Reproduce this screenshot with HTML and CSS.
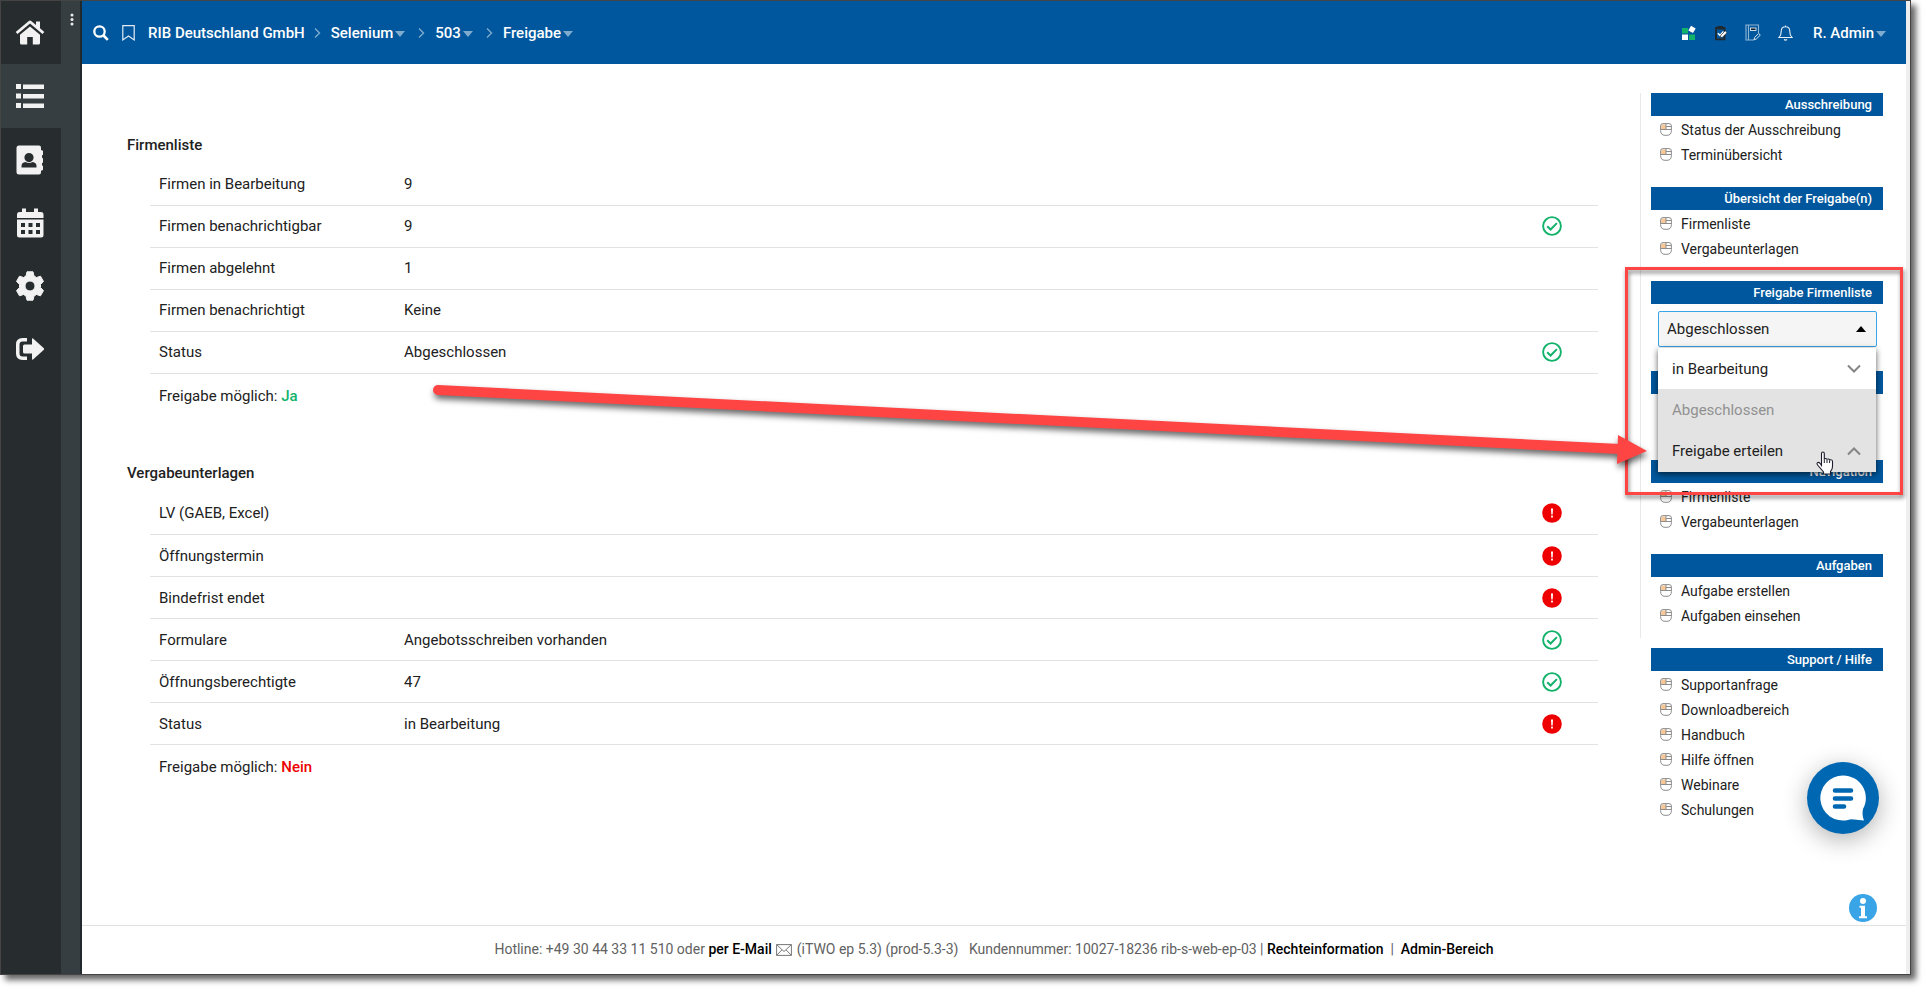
FILE: index.html
```html
<!DOCTYPE html>
<html lang="de">
<head>
<meta charset="utf-8">
<title>Freigabe</title>
<link rel="stylesheet" href="styles.css">
</head>
<body>
<svg class="defs" aria-hidden="true">
  <symbol id="ok" viewBox="0 0 20 20"><circle cx="10" cy="10" r="8.9" fill="none" stroke="#12b26b" stroke-width="1.9"/><path d="M5.2 10.2l3.4 3.3 6.3-6.4" fill="none" stroke="#12b26b" stroke-width="2"/></symbol>
  <symbol id="bad" viewBox="0 0 20 20"><circle cx="10" cy="10" r="9.8" fill="#ee0000"/><path d="M9 5.4h2l-.3 6H9.300z" fill="#fff"/><rect x="9.100" y="12.600" width="1.800" height="1.900" fill="#fff"/></symbol>
  <symbol id="mouse" viewBox="0 0 12 13"><path d="M1.500 1.500H6V6H1z" fill="#f8c795"/><path d="M3 .6h6Q11.400.6 11.400 3v4.500q0 4.800-4.400 4.800H5Q.6 12.300.6 7.500V3Q.6.600 3 .6zM.6 6.500h10.800M6 .6v6M6 3.500h5" fill="none" stroke="#8d8d8d"/></symbol>
  <symbol id="next" viewBox="0 0 7 10"><path d="M1 .6l4.500 4.400L1 9.400" fill="none" stroke="#7fabce" stroke-width="1.400"/></symbol>
  <symbol id="caret" viewBox="0 0 10 6"><path d="M0 0h10L5 6z" fill="#7fabce"/></symbol>
</svg>
<div class="window">
  <nav class="rail" aria-label="Hauptmenü">
    <a class="rail-item" href="#" aria-label="Start"><svg width="30" height="26" viewBox="0 0 30 26"><path d="M15 3.500L27.500 14l1.800-2L25 8.300V1.500h-4v3.400L16.500 1.200q-1.500-1.200-3 0L.7 12l1.800 2z"/><path d="M15 6.500l10 8.300V23q0 1.500-1.500 1.500h-5.700V17h-5.600v7.500H6.500Q5 24.500 5 23v-8.200z"/></svg></a>
    <a class="rail-item active" href="#" aria-label="Liste"><svg width="30" height="26" viewBox="0 0 30 26"><path d="M1 1h5v5H1zM8 1.500h21v4.500H8zM1 10.500h5v5H1zM8 11h21v4.500H8zM1 20h5v5H1zM8 20.500h21v4.500H8z"/></svg></a>
    <a class="rail-item" href="#" aria-label="Kontakte"><svg width="28" height="30" viewBox="0 0 28 30"><path fill-rule="evenodd" d="M3 .5h20q2 0 2 2V5l2 .8v4l-1 .8v2l1 .8v4l-1 .8v2l1 .8v4l-2 .8v1.700q0 2-2 2H3q-2.500 0-2.500-2.500V3Q.5.500 3 .5zM13 8a4.600 4.600 0 1 0 0 9.200A4.600 4.600 0 0 0 13 8zM9.500 17Q5.500 17.500 5.500 21v1.500h15V21q0-3.500-4-4-3.500 2-7 0z"/></svg></a>
    <a class="rail-item" href="#" aria-label="Kalender"><svg width="28" height="30" viewBox="0 0 28 30"><path fill-rule="evenodd" d="M6 .5h4V4h8V.5h4V4h3q2.500 0 2.500 2.500V10H1V6.500Q1 4 3.500 4H6zM1 11.500h26.500V27q0 2.500-2.500 2.500H3.500Q1 29.500 1 27zM5 15v4h4v-4zm7.500 0v4h4v-4zm7.500 0v4h4v-4zM5 22v4h4v-4zm7.500 0v4h4v-4zm7.500 0v4h4v-4z"/></svg></a>
    <a class="rail-item" href="#" aria-label="Einstellungen"><svg width="28" height="30" viewBox="0 0 28 30"><path fill-rule="evenodd" d="M11 .8h6l1 4.200 2.500 1.500 4-1.300 3 5.200-3 3v3.200l3 3-3 5.200-4-1.300L18 25l-1 4.200h-6L10 25l-2.500-1.500-4 1.300-3-5.200 3-3v-3.200l-3-3 3-5.200 4 1.300L10 5zM14 10a5 5 0 1 0 0 10 5 5 0 0 0 0-10z" stroke="#f2f2f2" stroke-linejoin="round"/></svg></a>
    <a class="rail-item" href="#" aria-label="Abmelden"><svg width="30" height="24" viewBox="0 0 30 24"><path d="M12 1v3.500H7.500Q4.500 4.500 4.500 7.500v9q0 3 3 3H12V23H7.500Q1 23 1 16.500v-9Q1 1 7.500 1z"/><path d="M9.500 7.500H17V2.500q0-2 1.600-.6l10 9q1.200 1.100 0 2.200l-10 9q-1.600 1.400-1.600-.6V16.500H9.500Q8 16.500 8 15V9q0-1.500 1.500-1.500z"/></svg></a>
  </nav>
  <div class="strip"><button class="dots" aria-label="Menü"><svg width="4" height="13" viewBox="0 0 4 13"><circle cx="2" cy="2" r="1.500"/><circle cx="2" cy="6.500" r="1.500"/><circle cx="2" cy="11" r="1.500"/></svg></button></div>
  <div class="page">
    <header class="top">
      <button class="icon search" aria-label="Suche"><svg width="16" height="16" viewBox="0 0 16 16"><circle cx="6.500" cy="6.500" r="5.200" fill="none" stroke="#fff" stroke-width="2.300"/><path d="M10.500 10.500l4.300 4.300" stroke="#fff" stroke-width="2.600"/></svg></button>
      <button class="icon mark" aria-label="Lesezeichen"><svg width="13" height="16" viewBox="0 0 13 16"><path d="M.8.7h11.400v14.200L6.500 11 .8 14.900z" fill="none" stroke="#e4edf5" stroke-width="1.200"/></svg></button>
      <nav class="crumbs" aria-label="Pfad">
        <a href="#">RIB Deutschland GmbH</a>
        <svg class="next"><use href="#next"/></svg>
        <a href="#">Selenium<svg class="caret"><use href="#caret"/></svg></a>
        <svg class="next wide"><use href="#next"/></svg>
        <a href="#">503<svg class="caret"><use href="#caret"/></svg></a>
        <svg class="next wide"><use href="#next"/></svg>
        <a href="#">Freigabe<svg class="caret"><use href="#caret"/></svg></a>
      </nav>
      <div class="tools">
        <button class="icon" aria-label="Apps"><svg width="16" height="16" viewBox="0 0 16 16"><path d="M1 3h6v5.500H1zM8 9.500h6V15H8z" fill="#12b26b"/><path d="M1 9.500h6V15H1z" fill="#fff"/><rect x="8.300" y="1.700" width="5.400" height="5.400" fill="#fff" transform="rotate(30 11 4.400)"/></svg></button>
        <button class="icon" aria-label="Aufgaben"><svg width="14" height="16" viewBox="0 0 14 16"><path d="M2 3h8.500v11.300H2z" fill="#00579d" stroke="#20282d" stroke-width="1.800"/><path d="M3.500 1h5.500v3.500H3.500z" fill="#20282d"/><path d="M3.800 8.200l2.200 2.200 3.500-3.800" fill="none" stroke="#fff" stroke-width="1.500"/><path d="M6 12.800l.8-2.600 4.400-4.400 1.900 1.900-4.500 4.400z" fill="#fff" stroke="#20282d" stroke-width=".7"/></svg></button>
        <button class="icon" aria-label="Notizen"><svg width="16" height="17" viewBox="0 0 16 17"><path d="M13.500 9V1H1v15h8M3.500 1v15" fill="none" stroke="#8fb5d4" stroke-width="1.100"/><rect x="5.500" y="4" width="5.500" height="2.500" fill="#10202c" stroke="#fff" stroke-width=".8"/><path d="M9 15.800l.7-2.500 4-3.800 1.600 1.600-4 3.900z" fill="none" stroke="#d5e3ef"/></svg></button>
        <button class="icon" aria-label="Meldungen"><svg width="15" height="16" viewBox="0 0 15 16"><path d="M1 12.500q2.200-2 2.200-6Q3.200 1.800 7.500 1.800t4.300 4.700q0 4 2.200 6zM6 14.500q1.500 1.300 3 0M7.500.5v1.300" fill="none" stroke="#e8f0f7" stroke-width="1.100"/></svg></button>
        <a href="#" class="user">R. Admin<svg class="caret"><use href="#caret"/></svg></a>
      </div>
    </header>
    <div class="body">
      <main class="content">
        <h2>Firmenliste</h2>
        <table>
          <tr><th scope="row">Firmen in Bearbeitung</th><td>9</td><td class="state"></td></tr>
          <tr><th scope="row">Firmen benachrichtigbar</th><td>9</td><td class="state"><svg><use href="#ok"/></svg></td></tr>
          <tr><th scope="row">Firmen abgelehnt</th><td>1</td><td class="state"></td></tr>
          <tr><th scope="row">Firmen benachrichtigt</th><td>Keine</td><td class="state"></td></tr>
          <tr><th scope="row">Status</th><td>Abgeschlossen</td><td class="state"><svg><use href="#ok"/></svg></td></tr>
        </table>
        <p class="result">Freigabe möglich: <strong class="yes">Ja</strong></p>
        <h2>Vergabeunterlagen</h2>
        <table>
          <tr><th scope="row">LV (GAEB, Excel)</th><td></td><td class="state"><svg><use href="#bad"/></svg></td></tr>
          <tr><th scope="row">Öffnungstermin</th><td></td><td class="state"><svg><use href="#bad"/></svg></td></tr>
          <tr><th scope="row">Bindefrist endet</th><td></td><td class="state"><svg><use href="#bad"/></svg></td></tr>
          <tr><th scope="row">Formulare</th><td>Angebotsschreiben vorhanden</td><td class="state"><svg><use href="#ok"/></svg></td></tr>
          <tr><th scope="row">Öffnungsberechtigte</th><td>47</td><td class="state"><svg><use href="#ok"/></svg></td></tr>
          <tr><th scope="row">Status</th><td>in Bearbeitung</td><td class="state"><svg><use href="#bad"/></svg></td></tr>
        </table>
        <p class="result">Freigabe möglich: <strong class="no">Nein</strong></p>
      </main>
      <aside class="side">
        <div class="side-main">
          <section><h3>Ausschreibung</h3>
            <a href="#"><svg><use href="#mouse"/></svg>Status der Ausschreibung</a>
            <a href="#"><svg><use href="#mouse"/></svg>Terminübersicht</a></section>
          <section><h3>Übersicht der Freigabe(n)</h3>
            <a href="#"><svg><use href="#mouse"/></svg>Firmenliste</a>
            <a href="#"><svg><use href="#mouse"/></svg>Vergabeunterlagen</a></section>
          <section class="picker"><h3>Freigabe Firmenliste</h3>
            <div class="select-wrap">
              <select aria-label="Freigabe Firmenliste"><option>Abgeschlossen</option></select>
              <svg class="up" viewBox="0 0 10 6"><path d="M0 6h10L5 0z"/></svg>
              <div class="menu">
                <button>in Bearbeitung<svg viewBox="0 0 14 9"><path d="M1 1.500l6 6 6-6"/></svg></button>
                <button class="off" disabled>Abgeschlossen</button>
                <button class="hover">Freigabe erteilen<svg viewBox="0 0 14 9"><path d="M1 7.500l6-6 6 6"/></svg></button>
              </div>
            </div></section>
          <section class="picker"><h3></h3></section>
          <section><h3>Navigation</h3>
            <a href="#"><svg><use href="#mouse"/></svg>Firmenliste</a>
            <a href="#"><svg><use href="#mouse"/></svg>Vergabeunterlagen</a></section>
          <section><h3>Aufgaben</h3>
            <a href="#"><svg><use href="#mouse"/></svg>Aufgabe erstellen</a>
            <a href="#"><svg><use href="#mouse"/></svg>Aufgaben einsehen</a></section>
        </div>
        <section class="support"><h3>Support / Hilfe</h3>
          <a href="#"><svg><use href="#mouse"/></svg>Supportanfrage</a>
          <a href="#"><svg><use href="#mouse"/></svg>Downloadbereich</a>
          <a href="#"><svg><use href="#mouse"/></svg>Handbuch</a>
          <a href="#"><svg><use href="#mouse"/></svg>Hilfe öffnen</a>
          <a href="#"><svg><use href="#mouse"/></svg>Webinare</a>
          <a href="#"><svg><use href="#mouse"/></svg>Schulungen</a></section>
      </aside>
    </div>
    <footer>
      <span>Hotline: +49 30 44 33 11 510 oder <a href="#">per E-Mail</a> <svg class="mail" width="16" height="12" viewBox="0 0 16 12"><path d="M.6.600h14.800v10.800H.6zL8 7.500 15.400.6M.6 11.400L5.800 6M15.400 11.400L10.200 6" fill="none" stroke="#777"/></svg> (iTWO ep 5.3) (prod-5.3-3) &nbsp; Kundennummer: 10027-18236 rib-s-web-ep-03 | <a href="#">Rechteinformation</a> &nbsp;|&nbsp; <a href="#">Admin-Bereich</a></span>
    </footer>
  </div>
  <button class="chat" aria-label="Chat"><svg width="46" height="46" viewBox="0 0 46 46"><path d="M23 .5a22.500 22.500 0 1 0 5 44.400q3-1 6-.3l10 1q-2.500-6-.8-12A22.500 22.500 0 0 0 23 .5z" fill="#fff"/><path d="M15 15.500h16M15 23.500h16M15 31.500h9" stroke="#0068b3" stroke-width="4.600" stroke-linecap="round"/></svg></button>
  <button class="info" aria-label="Information"><svg width="28" height="28" viewBox="0 0 28 28"><circle cx="14" cy="14" r="14" fill="#39a4e6"/><circle cx="14" cy="7" r="3" fill="#fff"/><path d="M10.500 11.800H16v10.400h2v2h-8v-2h2v-8.400h-1.500z" fill="#fff"/></svg></button>
  <div class="frame"></div>
  <svg class="arrow" width="1230" height="100" viewBox="0 0 1230 100"><path d="M13 20L1195 79" stroke="#ff4444" stroke-width="10" stroke-linecap="round"/><path d="M1193 65l29 16-30 13z" fill="#ff4444"/></svg>
  <svg class="hand" width="18" height="24" viewBox="0 0 18 24"><path d="M5.500 14.500V2.500Q5.500 1 6.900 1t1.400 1.500v6q0-1 1.300-1t1.400 1.300q0-.9 1.300-.8 1.300.1 1.300 1.500.2-.9 1.400-.7 1.500.1 1.500 1.700v5q0 3-2 5v2.500H7.500v-2L2 14.500Q.3 12.500 1.500 11.600q1.300-.8 2.500.7z" fill="#fff" stroke="#1c1c2c" stroke-width="1.100"/><path d="M8.300 8.500V12M11 9v3M13.600 9.500V12" stroke="#1c1c2c" fill="none"/></svg>
</div>
</body>
</html>
```
FILE: styles.css
```css
* { box-sizing: border-box; }
body { margin: 0; padding: 0 15px 15px 0; background: #fff; color: #212121; font: 15px/24px Roboto, "Liberation Sans", sans-serif; }
a { color: inherit; text-decoration: none; }
button { border: 0; padding: 0; background: none; font: inherit; color: inherit; cursor: pointer; }
h2, h3, p { margin: 0; }
.defs { position: absolute; width: 0; height: 0; }
.window { position: relative; display: flex; min-height: calc(100vh - 15px); border: 1px solid #444; background: #fff; box-shadow: 5px 5px 6px rgba(0, 0, 0, .6); }

.rail { width: 60px; background: #272c2e; flex: none; }
.rail-item { display: flex; align-items: center; justify-content: center; height: 63px; padding-right: 3px; }
.rail-item svg { fill: #f2f2f2; }
.rail-item.active { height: 64px; background: #363e41; }
.strip { width: 21px; flex: none; background: #363e41; border-right: 2px solid #22292c; }
.dots { display: block; padding: 12px 0 0 9px; line-height: 0; }
.dots svg { fill: #eee; }

.page { flex: 1; display: flex; flex-direction: column; min-width: 0; border-right: 4px solid #eee; }
.top { display: flex; align-items: center; height: 63px; padding: 0 20px 0 11px; background: #00579d; color: #fff; font-weight: 500; }
.icon { display: flex; }
.mark { margin-left: 13px; }
.crumbs { display: flex; align-items: center; margin-left: 13px; }
.next { width: 7px; height: 10px; margin: 0 10px 0 9px; }
.wide { margin-left: 13px; }
.caret { width: 10px; height: 6px; margin-left: 2px; vertical-align: 1px; }
.tools { display: flex; align-items: center; gap: 17px; margin-left: auto; }
.user { margin-left: 3px; }

.body { flex: 1; display: flex; }
.content { flex: 1; padding: 69px 42px 0 45px; }
h2 { font-size: 15px; line-height: 24px; font-weight: 500; }
table { width: calc(100% - 23px); margin: 6px 0 0 23px; border-collapse: collapse; table-layout: fixed; }
tr { height: 42px; border-bottom: 1px solid #e2e2e2; }
th { width: 245px; font-weight: 400; text-align: left; }
th, td { padding: 0 9px; }
.state { width: 92px; padding: 0 36px; line-height: 0; }
.state svg { width: 20px; height: 20px; }
.result { margin: 10px 0 0 32px; }
.result + h2 { margin-top: 53px; }
.result + h2 + table { margin-top: 8px; }
strong { font-weight: 500; }
.yes { color: #12b26b; }
.no { color: #ee0000; }

.side { width: 266px; flex: none; padding: 29px 23px 0 0; }
.side-main { border-left: 1px solid #e8e8e8; padding-left: 10px; }
.side section { min-height: 94px; }
.side section.picker { min-height: 90px; }
.side section.picker + .picker { min-height: 89px; }
.side-main section:last-child { min-height: 84px; }
.side h3 { height: 23px; margin-bottom: 1px; padding-right: 11px; background: #00579d; color: #fff; font-size: 13px; line-height: 23px; font-weight: 500; text-align: right; }
.side section > a { display: flex; align-items: center; gap: 9px; height: 25px; padding-left: 9px; font-size: 14px; }
.side section > a svg { width: 12px; height: 13px; }
.support { margin: 10px 0 0 11px; }
.select-wrap { position: relative; margin: 7px 6px 0 7px; }
select { display: block; width: 100%; height: 36px; padding: 0 8px; appearance: none; border: 1px solid #39a4e6; border-radius: 2px; background: #f5f5f5; color: #212121; font: inherit; }
.up { position: absolute; right: 11px; top: 15px; width: 10px; height: 6px; }
.menu { position: absolute; z-index: 2; top: 37px; left: 0; right: 1px; background: #fff; box-shadow: 0 2px 6px rgba(0, 0, 0, .65); }
.menu button { display: flex; align-items: center; justify-content: space-between; width: 100%; height: 41px; padding: 0 15px 0 14px; }
.menu button.hover { height: 42px; }
.menu .off, .menu .hover { background: #e3e3e3; }
.menu .off { color: #919191; }
.menu svg { width: 14px; height: 9px; fill: none; stroke: #858585; stroke-width: 2; }

footer { height: 49px; padding-bottom: 2px; border-top: 1px solid #e2e2e2; display: flex; align-items: center; justify-content: center; color: #616161; font-size: 14px; }
footer a { color: #000; font-weight: 500; }
.mail { margin: 0 1px; vertical-align: -2px; }

.chat { position: absolute; right: 31px; bottom: 140px; width: 72px; height: 72px; border-radius: 50%; background: #0068b3; display: flex; align-items: center; justify-content: center; box-shadow: 0 6px 24px rgba(0, 0, 0, .3); }
.info { position: absolute; right: 33px; bottom: 52px; line-height: 0; }
.frame { position: absolute; z-index: 3; top: 266px; right: 7px; width: 278px; height: 228px; border: 3px solid #ff4444; filter: drop-shadow(1px 3px 2px rgba(0, 0, 0, .5)); pointer-events: none; }
.arrow { position: absolute; z-index: 4; top: 369px; right: 255px; filter: drop-shadow(1px 4px 3px rgba(0, 0, 0, .6)); pointer-events: none; }
.hand { position: absolute; z-index: 5; top: 450px; right: 76px; }
```
